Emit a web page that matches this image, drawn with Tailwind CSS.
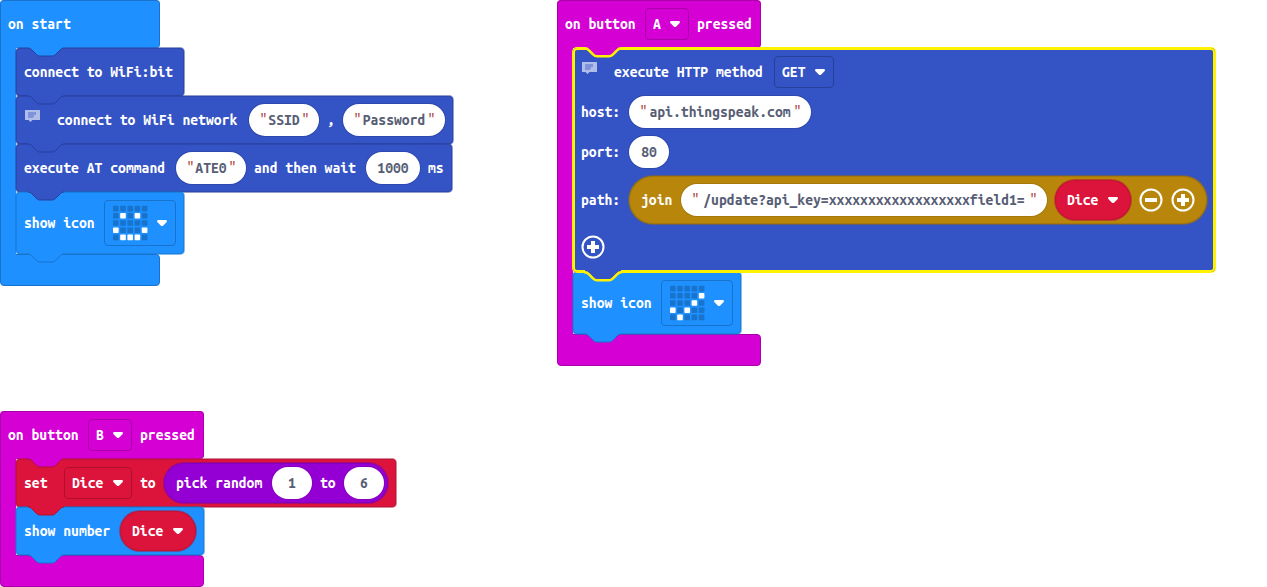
<!DOCTYPE html>
<html lang="en">
<head>
<meta charset="utf-8">
<meta name="viewport" content="width=device-width, initial-scale=1">
<title>Blocks workspace</title>
<script src="https://cdn.jsdelivr.net/npm/@tailwindcss/browser@4"></script>
</head>
<body class="bg-white">
<svg class="hidden" aria-hidden="true">
  <symbol id="tab" viewBox="0 0 36 8" overflow="visible">
    <path stroke="none" d="M0 0c2 0 3 1 4 2l4 4c1 1 2 2 4 2h12c2 0 3-1 4-2l4-4c1-1 2-2 4-2V-1H0z"/>
    <path fill="none" stroke="currentColor" d="M0 0c2 0 3 1 4 2l4 4c1 1 2 2 4 2h12c2 0 3-1 4-2l4-4c1-1 2-2 4-2"/>
  </symbol>
  <symbol id="tab-selected" viewBox="0 0 36 8" overflow="visible">
    <path stroke="none" d="M0 1c2 0 3 1 4 2l4 4c1 1 2 2 4 2h12c2 0 3-1 4-2l4-4c1-1 2-2 4-2V-2H0z"/>
    <path fill="none" stroke="currentColor" stroke-width="2.6" d="M-1 .3H0c2 0 3 1 4 2l4 4c1 1 2 2 4 2h12c2 0 3-1 4-2l4-4c1-1 2-2 4-2h1"/>
  </symbol>
  <symbol id="arrow" viewBox="0 0 12 8"><path fill="#fff" d="M2.2 1h7.6c1.1 0 1.6 1.1.9 1.9L7 6.700c-.6.500-1.400.500-2 0L1.300 2.900C.600 2.100 1.100 1 2.200 1z"/></symbol>
  <symbol id="note" viewBox="0 0 16 12">
    <path fill="#fff" fill-opacity=".62" d="M1 0h15v10H8.500L6.500 12 4.500 10H1z"/>
    <path fill="#3453c4" fill-opacity=".4" d="M4 2h8v3h-2v2H9v1H4z"/>
  </symbol>
  <symbol id="plus" viewBox="0 0 24 24"><circle cx="12" cy="12" r="10.500" fill="none" stroke="#fff" stroke-width="2"/><path fill="#fff" d="M10 6h4v4h4v4h-4v4h-4v-4H6v-4h4z"/></symbol>
  <symbol id="minus" viewBox="0 0 24 24"><circle cx="12" cy="12" r="10.500" fill="none" stroke="#fff" stroke-width="2"/><path fill="#fff" d="M6 10h12v4H6z"/></symbol>
</svg>

<main class="relative min-h-screen w-full overflow-hidden font-['Ubuntu_Mono','DejaVu_Sans_Mono',monospace] text-[14px] leading-4 font-bold whitespace-pre text-white">

  <!-- on start -->
  <section class="absolute top-0 left-0 flex flex-col items-start">
    <div class="flex h-12 w-40 items-center rounded-t rounded-br border border-b-0 border-[#1873cc] bg-[#1e90ff] px-[7px] pb-0.5">on start</div>
    <div class="flex">
      <div class="relative z-10 -my-px w-4 border-l border-[#1873cc] bg-[#1e90ff]"></div>
      <div class="relative z-20 flex flex-col items-start">
        <div class="relative flex h-12 items-center rounded bg-[#3453c4] px-2 ring-1 ring-[#26409c]/50 inset-ring-1 inset-ring-[#26409c]/50">
          <svg class="absolute top-0 left-3 h-2 w-9 overflow-visible fill-[#1e90ff] text-[#26409c]"><use href="#tab"/></svg>
          <span class="w-38">connect to WiFi:bit</span>
        </div>
        <div class="relative flex h-12 items-center gap-2 rounded bg-[#3453c4] px-2 ring-1 ring-[#26409c]/50 inset-ring-1 inset-ring-[#26409c]/50">
          <svg class="absolute top-0 left-3 h-2 w-9 overflow-visible fill-[#3453c4] text-[#26409c]"><use href="#tab"/></svg>
          <button class="mt-3.5 w-[25px] self-start" aria-label="Comment"><svg class="h-3 w-4"><use href="#note"/></svg></button>
          <span class="w-46">connect to WiFi network</span>
          <label class="flex h-8 items-center gap-px rounded-full bg-white px-[10px] text-[#575e75] ring-1 ring-[#26409c]/50"><span class="w-2 text-base font-normal text-[#a31515]">"</span><input class="w-8 text-center outline-none" aria-label="SSID" value="SSID"><span class="w-2 text-base font-normal text-[#a31515]">"</span></label>
          <span class="w-2">,</span>
          <label class="flex h-8 items-center gap-px rounded-full bg-white px-[10px] text-[#575e75] ring-1 ring-[#26409c]/50"><span class="w-2 text-base font-normal text-[#a31515]">"</span><input class="w-16 text-center outline-none" aria-label="Password" value="Password"><span class="w-2 text-base font-normal text-[#a31515]">"</span></label>
        </div>
        <div class="relative flex h-12 items-center gap-2 rounded bg-[#3453c4] px-2 ring-1 ring-[#26409c]/50 inset-ring-1 inset-ring-[#26409c]/50">
          <svg class="absolute top-0 left-3 h-2 w-9 overflow-visible fill-[#3453c4] text-[#26409c]"><use href="#tab"/></svg>
          <span class="w-36">execute AT command</span>
          <label class="flex h-8 items-center gap-px rounded-full bg-white px-[10px] text-[#575e75] ring-1 ring-[#26409c]/50"><span class="w-2 text-base font-normal text-[#a31515]">"</span><input class="w-8 text-center outline-none" aria-label="AT command" value="ATE0"><span class="w-2 text-base font-normal text-[#a31515]">"</span></label>
          <span class="w-26">and then wait</span>
          <input class="h-8 w-[54px] rounded-full bg-white text-center text-[#575e75] ring-1 ring-[#26409c]/50 outline-none" aria-label="Wait in milliseconds" value="1000">
          <span class="w-4">ms</span>
        </div>
        <div class="relative flex items-center gap-2 rounded bg-[#1e90ff] p-2 ring-1 ring-[#1873cc]/50 inset-ring-1 inset-ring-[#1873cc]/50">
          <svg class="absolute top-0 left-3 h-2 w-9 overflow-visible fill-[#3453c4] text-[#26409c]"><use href="#tab"/></svg>
          <span class="w-18">show icon</span>
          <button class="flex h-[46px] w-18 items-center justify-between rounded border border-[#1873cc] pr-[7px] pl-2" aria-label="Happy icon">
            <svg class="h-9 w-9" viewBox="0 0 36 36" data-leds="00000 01010 00000 10001 01110"></svg>
            <svg class="h-2 w-3"><use href="#arrow"/></svg>
          </button>
          <svg class="absolute top-full left-3 h-2 w-9 overflow-visible fill-[#1e90ff] text-[#1873cc]"><use href="#tab"/></svg>
        </div>
      </div>
    </div>
    <div class="h-8 w-40 rounded-tr rounded-b border border-[#1873cc] bg-[#1e90ff]"></div>
  </section>

  <!-- on button A pressed -->
  <section class="absolute top-0 left-[557px] flex flex-col items-start">
    <div class="flex h-12 items-center gap-2 rounded-t rounded-br border border-b-0 border-[#aa00aa] bg-[#d400d4] px-[7px] pb-0.5">
      <span class="w-18">on button</span>
      <span class="flex h-8 items-center gap-2 rounded border border-[#aa00aa] px-[7px]"><select class="w-2 appearance-none outline-none" aria-label="Button"><option>A</option></select><svg class="h-2 w-3"><use href="#arrow"/></svg></span>
      <span class="w-14">pressed</span>
    </div>
    <div class="flex">
      <div class="relative z-10 -my-px w-4 border-l border-[#aa00aa] bg-[#d400d4]"></div>
      <div class="relative z-20 flex flex-col items-start">
        <div class="relative z-10 flex flex-col items-start gap-2 rounded bg-[#3453c4] px-2 ring-1 ring-[#fff200] inset-ring-2 inset-ring-[#fff200]">
          <svg class="absolute top-0 left-3 h-2 w-9 overflow-visible fill-[#d400d4] text-[#fff200]"><use href="#tab-selected"/></svg>
          <div class="-mb-2 flex h-12 items-center gap-2">
            <button class="mt-3.5 w-[25px] self-start" aria-label="Comment"><svg class="h-3 w-4"><use href="#note"/></svg></button>
            <span class="w-38">execute HTTP method</span>
            <span class="flex h-8 items-center gap-2 rounded border border-[#26409c] px-[7px]"><select class="w-6 appearance-none outline-none" aria-label="HTTP method"><option>GET</option></select><svg class="h-2 w-3"><use href="#arrow"/></svg></span>
          </div>
          <div class="flex items-center gap-2">
            <span class="w-10">host:</span>
            <label class="flex h-8 items-center gap-px rounded-full bg-white px-[10px] text-[#575e75] ring-1 ring-[#26409c]/50"><span class="w-2 text-base font-normal text-[#a31515]">"</span><input class="w-36 text-center outline-none" aria-label="Host" value="api.thingspeak.com"><span class="w-2 text-base font-normal text-[#a31515]">"</span></label>
          </div>
          <label class="flex items-center gap-2">
            <span class="w-10">port:</span>
            <input class="h-8 w-10 rounded-full bg-white text-center text-[#575e75] ring-1 ring-[#26409c]/50 outline-none" value="80">
          </label>
          <div class="flex items-center gap-2">
            <span class="w-10">path:</span>
            <div class="flex h-12 items-center gap-2 rounded-full bg-[#b8860b] px-3 ring-1 ring-[#936b09]/50 inset-ring-1 inset-ring-[#936b09]/50">
              <span class="w-8">join</span>
              <label class="flex h-8 items-center gap-px rounded-full bg-white px-[10px] text-[#575e75] ring-1 ring-[#936b09]/50"><span class="w-2 text-base font-normal text-[#a31515]">"</span><input class="w-82 text-center outline-none" aria-label="Path" value="/update?api_key=xxxxxxxxxxxxxxxxxxfield1="><span class="w-2 text-base font-normal text-[#a31515]">"</span></label>
              <span class="flex h-10 items-center gap-2 rounded-full bg-[#dc143c] px-3 ring-1 ring-[#b01030]/50 inset-ring-1 inset-ring-[#b01030]/50"><select class="w-8 appearance-none outline-none" aria-label="Variable"><option>Dice</option></select><svg class="h-2 w-3"><use href="#arrow"/></svg></span>
              <button aria-label="Remove text"><svg class="h-6 w-6"><use href="#minus"/></svg></button>
              <button aria-label="Add text"><svg class="h-6 w-6"><use href="#plus"/></svg></button>
            </div>
          </div>
          <div class="-mt-2 flex h-12 items-center pb-0.5"><button aria-label="Expand block"><svg class="h-6 w-6"><use href="#plus"/></svg></button></div>
          <svg class="absolute top-full left-3 h-2 w-9 overflow-visible fill-[#3453c4] text-[#fff200]"><use href="#tab-selected"/></svg>
        </div>
        <div class="relative flex items-center gap-2 rounded bg-[#1e90ff] p-2 ring-1 ring-[#1873cc]/50 inset-ring-1 inset-ring-[#1873cc]/50">
          <span class="w-18">show icon</span>
          <button class="flex h-[46px] w-18 items-center justify-between rounded border border-[#1873cc] pr-[7px] pl-2" aria-label="Tick icon">
            <svg class="h-9 w-9" viewBox="0 0 36 36" data-leds="00000 00001 00010 10100 01000"></svg>
            <svg class="h-2 w-3"><use href="#arrow"/></svg>
          </button>
          <svg class="absolute top-full left-3 h-2 w-9 overflow-visible fill-[#1e90ff] text-[#1873cc]"><use href="#tab"/></svg>
        </div>
      </div>
    </div>
    <div class="h-8 w-51 rounded-tr rounded-b border border-[#aa00aa] bg-[#d400d4]"></div>
  </section>

  <!-- on button B pressed -->
  <section class="absolute top-[411px] left-0 flex flex-col items-start">
    <div class="flex h-12 items-center gap-2 rounded-t rounded-br border border-b-0 border-[#aa00aa] bg-[#d400d4] px-[7px] pb-0.5">
      <span class="w-18">on button</span>
      <span class="flex h-8 items-center gap-2 rounded border border-[#aa00aa] px-[7px]"><select class="w-2 appearance-none outline-none" aria-label="Button"><option>B</option></select><svg class="h-2 w-3"><use href="#arrow"/></svg></span>
      <span class="w-14">pressed</span>
    </div>
    <div class="flex">
      <div class="relative z-10 -my-px w-4 border-l border-[#aa00aa] bg-[#d400d4]"></div>
      <div class="relative z-20 flex flex-col items-start">
        <div class="relative flex h-12 items-center gap-2 rounded bg-[#dc143c] px-2 ring-1 ring-[#b01030]/50 inset-ring-1 inset-ring-[#b01030]/50">
          <svg class="absolute top-0 left-3 h-2 w-9 overflow-visible fill-[#d400d4] text-[#b01030]"><use href="#tab"/></svg>
          <span class="w-8">set</span>
          <span class="flex h-8 items-center gap-2 rounded border border-[#b01030] px-[7px]"><select class="w-8 appearance-none outline-none" aria-label="Variable"><option>Dice</option></select><svg class="h-2 w-3"><use href="#arrow"/></svg></span>
          <span class="w-4">to</span>
          <div class="flex h-10 items-center gap-2 rounded-full bg-[#9400d3] pr-1 pl-3 ring-1 ring-[#7600a9]/50 inset-ring-1 inset-ring-[#7600a9]/50">
            <span class="w-22">pick random</span>
            <input class="h-8 w-10 rounded-full bg-white text-center text-[#575e75] ring-1 ring-[#7600a9]/50 outline-none" aria-label="Minimum" value="1">
            <span class="w-4">to</span>
            <input class="h-8 w-10 rounded-full bg-white text-center text-[#575e75] ring-1 ring-[#7600a9]/50 outline-none" aria-label="Maximum" value="6">
          </div>
        </div>
        <div class="relative flex h-12 items-center gap-2 rounded bg-[#1e90ff] px-2 ring-1 ring-[#1873cc]/50 inset-ring-1 inset-ring-[#1873cc]/50">
          <svg class="absolute top-0 left-3 h-2 w-9 overflow-visible fill-[#dc143c] text-[#b01030]"><use href="#tab"/></svg>
          <span class="w-22">show number</span>
          <span class="flex h-10 items-center gap-2 rounded-full bg-[#dc143c] px-3 ring-1 ring-[#b01030]/50 inset-ring-1 inset-ring-[#b01030]/50"><select class="w-8 appearance-none outline-none" aria-label="Variable"><option>Dice</option></select><svg class="h-2 w-3"><use href="#arrow"/></svg></span>
          <svg class="absolute top-full left-3 h-2 w-9 overflow-visible fill-[#1e90ff] text-[#1873cc]"><use href="#tab"/></svg>
        </div>
      </div>
    </div>
    <div class="h-8 w-51 rounded-tr rounded-b border border-[#aa00aa] bg-[#d400d4]"></div>
  </section>
</main>

<script>
// Fills each LED preview with its 5x5 grid of squares.
for (const svg of document.querySelectorAll('[data-leds]')) {
  svg.dataset.leds.split(' ').forEach((row, y) => [...row].forEach((led, x) => {
    const r = document.createElementNS('http://www.w3.org/2000/svg', 'rect');
    const attrs = { x: x * 7.2, y: 0.8 + y * 7.2, width: 5.6, height: 5.6, rx: 0.8, fill: led === '1' ? '#fff' : '#1873cc' };
    for (const k in attrs) r.setAttribute(k, attrs[k]);
    svg.append(r);
  }));
}
</script>
</body>
</html>
